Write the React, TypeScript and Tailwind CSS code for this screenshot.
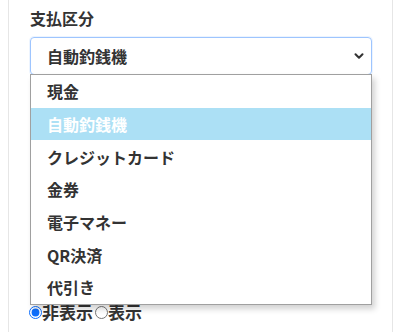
import { ChevronDown } from "lucide-react";

const options = ["現金", "自動釣銭機", "クレジットカード", "金券", "電子マネー", "QR決済", "代引き"];

export default function App() {
  const selected = "自動釣銭機";
  return (
    <div
      className="relative w-[400px] h-[332px] overflow-hidden bg-white text-[#333]"
      style={{ fontFamily: '"Noto Sans CJK JP", "Noto Sans", sans-serif' }}
    >
      <div className="ml-[8px] mr-[7px] h-full border-l border-r border-[#e6e6e6]">
        <div className="pl-[21px] pr-[20px] pt-[5px]">
          <div className="text-[16px] font-bold leading-[26px]">支払区分</div>
          <div className="mt-[6px] flex h-[38px] items-center justify-between rounded-[4px] border border-[#9ec5fe] pl-[16px] pr-[5px] shadow-[0_0_0_1px_rgba(13,110,253,0.08)]">
            <span className="text-[16px] font-bold leading-[20px] -mt-[1px]">{selected}</span>
            <ChevronDown size={14} strokeWidth={3.5} className="text-[#333]" />
          </div>
          <div className="h-[227px]" />
          <div className="-ml-[1px] flex items-center text-[17px] font-bold leading-[20px]">
            <input type="radio" name="disp" defaultChecked className="m-0 h-[13px] w-[13px] accent-[#0d6efd]" />
            <span>非表示</span>
            <input type="radio" name="disp" className="m-0 ml-[2px] h-[13px] w-[13px]" />
            <span>表示</span>
          </div>
        </div>
      </div>
      <ul className="absolute left-[30px] top-[74px] w-[342px] border border-[#a0a0a0] bg-white shadow-[3px_4px_6px_rgba(0,0,0,0.18)]">
        {options.map((o) => (
          <li
            key={o}
            className={
              "flex h-[32.7px] items-center pl-[16px] text-[16px] font-bold leading-[20px] " +
              (o === selected ? "bg-[#ace0f5] text-white" : "text-[#333]")
            }
          >
            {o}
          </li>
        ))}
      </ul>
    </div>
  );
}
